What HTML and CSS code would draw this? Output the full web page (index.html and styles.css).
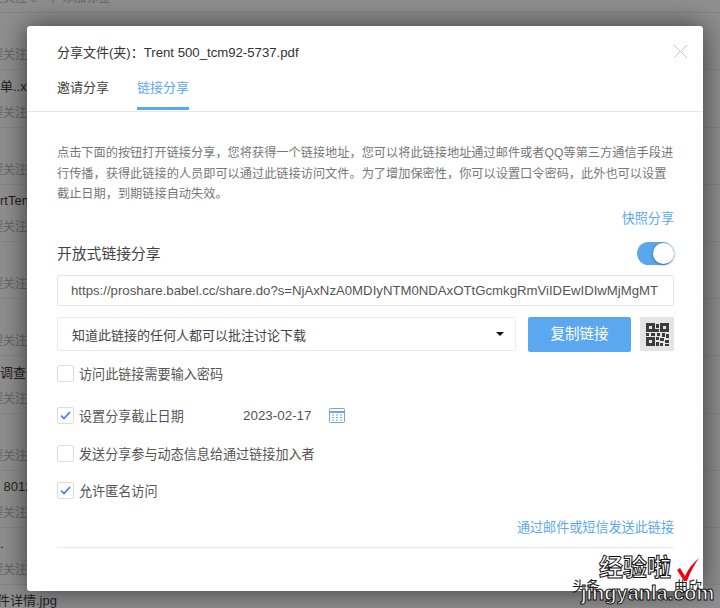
FILE: index.html
```html
<!DOCTYPE html>
<html lang="en">
<head>
    <meta charset="UTF-8">
    <meta name="viewport" content="width=device-width, initial-scale=1.0">
    <title>分享文件</title>
    <link rel="stylesheet" href="styles.css">
</head>
<body>
    <div class="file-list">
        <div class="file-row"><div class="file-name"></div><div class="file-meta">流程关注 0 &nbsp; 十 添加标签</div></div>
        <div class="file-row"><div class="file-name"></div><div class="file-meta">流程关注</div></div>
        <div class="file-row"><div class="file-name">单..xlsx</div><div class="file-meta">流程关注</div></div>
        <div class="file-row"><div class="file-name"></div><div class="file-meta">流程关注</div></div>
        <div class="file-row"><div class="file-name">rtTemplate</div><div class="file-meta">流程关注</div></div>
        <div class="file-row"><div class="file-name"></div><div class="file-meta">流程关注</div></div>
        <div class="file-row"><div class="file-name"></div><div class="file-meta">流程关注</div></div>
        <div class="file-row"><div class="file-name">调查</div><div class="file-meta">流程关注</div></div>
        <div class="file-row"><div class="file-name"></div><div class="file-meta">流程关注</div></div>
        <div class="file-row"><div class="file-name">&nbsp;8012</div><div class="file-meta">流程关注</div></div>
        <div class="file-row"><div class="file-name">.</div><div class="file-meta">流程关注</div></div>
        <div class="file-row"><div class="file-name last">件详情.jpg</div></div>
    </div>

    <div class="modal">
        <div class="modal-head">
            <div class="modal-title">分享文件(夹)：<span class="latin">Trent 500_tcm92-5737.pdf</span></div>
            <svg class="close-icon" width="15" height="15" viewBox="0 0 15 15"><path d="M1 1l13 13M14 1L1 14" stroke="#c8c8c8" stroke-width="1" fill="none"/></svg>
        </div>
        <div class="tabs">
            <div class="tab">邀请分享</div>
            <div class="tab active">链接分享</div>
        </div>
        <div class="modal-body">
            <p class="desc">点击下面的按钮打开链接分享，您将获得一个链接地址，您可以将此链接地址通过邮件或者QQ等第三方通信手段进行传播，获得此链接的人员即可以通过此链接访问文件。为了增加保密性，你可以设置口令密码，此外也可以设置截止日期，到期链接自动失效。</p>
            <div class="link-right snapshot">快照分享</div>
            <div class="open-row">
                <div class="open-label">开放式链接分享</div>
                <div class="toggle"><div class="knob"></div></div>
            </div>
            <div class="url-box">https://proshare.babel.cc/share.do?s=NjAxNzA0MDIyNTM0NDAxOTtGcmkgRmViIDEwIDIwMjMgMT</div>
            <div class="action-row">
                <div class="select">
                    <span>知道此链接的任何人都可以批注讨论下载</span>
                    <span class="caret"></span>
                </div>
                <div class="copy-btn">复制链接</div>
                <div class="qr-btn">
                    <svg width="23" height="23" viewBox="0 0 23 23">
                        <path fill="#3c3c3c" fill-rule="evenodd" d="M0 0h9v9H0zM3 3v3h3V3zM14 0h9v9h-9zM17 3v3h3V3zM0 14h9v9H0zM3 17v3h3v-3z"/>
                        <path fill="#3c3c3c" d="M10 1h3v4h-3zM9 6h4v3H9zM5 10h4v3H5zM0 10h3v3H0zM11 10h3v3h-3zM16 10h3v4h-3zM20 11h3v4h-3zM10 14h3v3h-3zM14 15h4v3h-4zM10 19h3v4h-3zM14 20h3v3h-3zM19 17h4v3h-4zM19 21h4v2h-4z"/>
                    </svg>
                </div>
            </div>
            <label class="check-row first"><span class="check"></span>访问此链接需要输入密码</label>
            <label class="check-row date-row">
                <span class="check on"><svg width="11" height="9" viewBox="0 0 11 9"><path d="M1 4.5L4 7.5 10 1" stroke="#3f7fe0" stroke-width="1.7" fill="none"/></svg></span>
                <span class="date-label">设置分享截止日期</span>
                <span class="date-value">2023-02-17</span>
                <svg class="cal-icon" width="16" height="15" viewBox="0 0 16 15">
                    <rect x="0.5" y="0.5" width="15" height="14" rx="1" fill="#fff" stroke="#76a3e6"/>
                    <path d="M0.5 4h15" stroke="#76a3e6" stroke-width="2"/>
                    <path d="M3 7h2M7 7h2M11 7h2M3 9.5h2M7 9.5h2M11 9.5h2M3 12h2M7 12h2M11 12h2" stroke="#76a3e6" stroke-width="1.2"/>
                </svg>
            </label>
            <label class="check-row"><span class="check"></span>发送分享参与动态信息给通过链接加入者</label>
            <label class="check-row anon-row">
                <span class="check on"><svg width="11" height="9" viewBox="0 0 11 9"><path d="M1 4.5L4 7.5 10 1" stroke="#3f7fe0" stroke-width="1.7" fill="none"/></svg></span>
                允许匿名访问
            </label>
            <div class="link-right send-link">通过邮件或短信发送此链接</div>
            <div class="body-rule"></div>
        </div>
    </div>

    <div class="watermark">
        <span class="wm-small">头条</span>
        <span class="wm-small wm-author">曲欣</span>
        <span class="wm-big">经验啦</span>
        <svg class="wm-tick" width="24" height="25" viewBox="0 0 24 25"><path d="M1 13l3-2 5 8C12 12 17 6 23 1c-4 6-9 14-12 23H8z" fill="#f00210"/></svg>
        <span class="wm-url">jingyanla.com</span>
    </div>
</body>
</html>
```

FILE: styles.css
```css
html, body {
    margin: 0;
    height: 100%;
}
body {
    position: relative;
    height: 608px;
    overflow: hidden;
    background-color: #8f8f8f;
    font-family: "Liberation Sans", "Noto Sans CJK SC", sans-serif;
}

/* dimmed page behind the dialog */
.file-list {
    margin-top: -44px;
    height: 652px;
    overflow: hidden;
}
.file-row {
    height: 57.2px;
    box-sizing: border-box;
    padding-top: 6.2px;
    border-bottom: 1px solid #868686;
}
.file-name {
    height: 20px;
    font-size: 13px;
    line-height: 20px;
    color: #1f1f1f;
    white-space: nowrap;
}
.file-name.last {
    margin-left: -3px;
}
.file-meta {
    margin-top: 8px;
    margin-left: -21px;
    font-size: 12px;
    line-height: 16px;
    color: #666;
    white-space: nowrap;
}

.modal {
    position: absolute;
    left: 27px;
    top: 26px;
    width: 676px;
    height: 565px;
    background-color: #fff;
    border-radius: 3px;
    box-shadow: 0 0 28px rgba(0,0,0,0.6);
}
.modal-head {
    height: 44px;
    padding: 18px 15px 0 30px;
    box-sizing: border-box;
    display: flex;
    justify-content: space-between;
    align-items: flex-start;
}
.modal-title {
    font-size: 13px;
    line-height: 18px;
    color: #333;
}
.latin {
    font-size: 13.2px;
}
.tabs {
    display: flex;
    gap: 28px;
    height: 41px;
    padding-left: 30px;
    border-bottom: 1px solid #e8e8ec;
}
.tab {
    font-size: 13px;
    line-height: 36px;
    height: 37px;
    color: #444;
    border-bottom: 3px solid transparent;
}
.tab.active {
    color: #5ba8f0;
    border-bottom-color: #5ba8f0;
}
.modal-body {
    padding: 31px 29px 0 30px;
}
.desc {
    margin: 0;
    font-size: 12.2px;
    line-height: 20.5px;
    color: #777;
}
.link-right {
    text-align: right;
    font-size: 13.1px;
    color: #5ba8f0;
    line-height: 18px;
}
.snapshot {
    margin-top: 5px;
}
.open-row {
    display: flex;
    justify-content: space-between;
    align-items: center;
    margin-top: 13px;
    height: 24px;
}
.open-label {
    font-size: 14.8px;
    color: #444;
}
.toggle {
    width: 37px;
    height: 23px;
    margin-top: 2px;
    border-radius: 12px;
    background-color: #5aa7ee;
    position: relative;
}
.knob {
    position: absolute;
    right: 0;
    top: 1px;
    width: 21px;
    height: 21px;
    border-radius: 50%;
    background-color: #fff;
    box-shadow: 0 1px 3px rgba(0,0,0,0.4);
}
.url-box {
    margin-top: 10px;
    height: 31px;
    box-sizing: border-box;
    border: 1px solid #e6e6ea;
    border-radius: 2px;
    padding: 0 13px;
    font-size: 13.2px;
    line-height: 29px;
    color: #555;
    white-space: nowrap;
    overflow: hidden;
}
.action-row {
    display: flex;
    align-items: center;
    margin-top: 11px;
    height: 35px;
}
.select {
    width: 459px;
    height: 34px;
    box-sizing: border-box;
    border: 1px solid #ececec;
    border-radius: 2px;
    padding: 0 11px 0 14px;
    display: flex;
    justify-content: space-between;
    align-items: center;
    font-size: 13px;
    color: #444;
}
.caret {
    width: 0;
    height: 0;
    border-left: 4.5px solid transparent;
    border-right: 4.5px solid transparent;
    border-top: 4.5px solid #111;
}
.copy-btn {
    margin-left: 12px;
    width: 103px;
    height: 35px;
    background-color: #5ba8f0;
    border-radius: 2px;
    color: #fff;
    font-size: 14.5px;
    line-height: 34px;
    text-align: center;
}
.qr-btn {
    margin-left: 9px;
    width: 34px;
    height: 34px;
    background-color: #e4e4e4;
    display: flex;
    justify-content: center;
    align-items: center;
}
.check-row {
    display: flex;
    align-items: center;
    height: 18px;
    margin-top: 20px;
    font-size: 13.1px;
    color: #555;
}
.check-row.first {
    margin-top: 13px;
}
.date-row {
    margin-top: 24px;
}
.anon-row {
    margin-top: 19px;
}
.check {
    width: 15px;
    height: 15px;
    border: 1px solid #dcdcdc;
    border-radius: 2px;
    margin-right: 5px;
    display: flex;
    justify-content: center;
    align-items: center;
    flex-shrink: 0;
}
.date-label {
    width: 164px;
}
.date-value {
    width: 86px;
    font-size: 13.4px;
    color: #555;
}
.send-link {
    margin-top: 19px;
}
.body-rule {
    margin-top: 10px;
    border-top: 1px solid #e8e8e8;
}

.watermark {
    position: absolute;
    left: 570px;
    top: 555px;
    width: 140px;
    height: 50px;
}
.wm-small, .wm-big, .wm-url, .wm-tick {
    position: absolute;
}
.wm-small {
    left: 2px;
    top: 20px;
    font-size: 14px;
    color: #222;
}
.wm-author {
    left: 104px;
}
.wm-big {
    left: 29px;
    top: -1px;
    font-size: 24px;
    line-height: 28px;
    font-weight: 700;
    color: #fff;
    -webkit-text-stroke: 1px #111;
}
.wm-tick {
    left: 106px;
    top: 2px;
}
.wm-url {
    left: 11px;
    top: 26px;
    font-size: 20px;
    line-height: 24px;
    font-weight: 700;
    color: #fff;
    -webkit-text-stroke: 1px #111;
}
```
